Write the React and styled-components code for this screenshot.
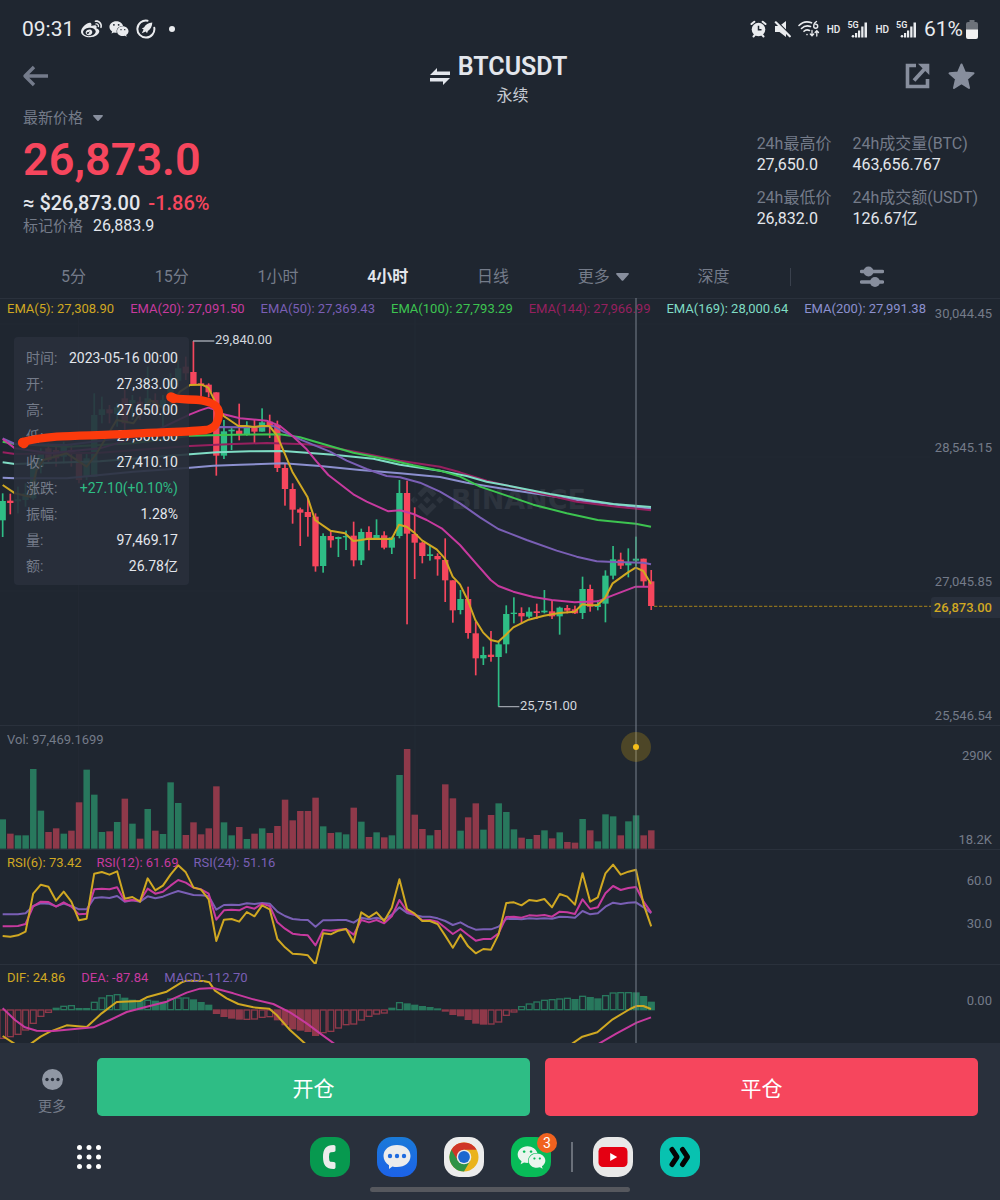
import React from "react";
import styled, { createGlobalStyle } from "styled-components";
import { FaWeibo, FaWeixin } from "react-icons/fa";

const c = {
  bg: "#1f2630",
  panel: "#29303c",
  line: "#2a313c",
  text: "#e3e6ec",
  muted: "#747b89",
  icon: "#878e9d",
  up: "#2ebd85",
  down: "#f6465d",
  yellow: "#d0a822",
  pink: "#c73a9f",
  purple: "#7a5fb5",
  green: "#3dc450",
  crimson: "#96205f",
  mint: "#7fdcc4",
  lilac: "#8c90cf",
};

const GlobalStyle = createGlobalStyle`
  * { box-sizing: border-box; }
  body {
    margin: 0;
    background: ${c.panel};
    color: ${c.text};
    font-family: Roboto, "Noto Sans CJK SC", sans-serif;
  }
  button, select {
    font: inherit;
    color: inherit;
    background: none;
    border: 0;
    padding: 0;
    cursor: pointer;
  }
  svg { display: block; }
`;

/* ---------- layout ---------- */

const Page = styled.div`
  min-height: 100vh;
  display: flex;
  flex-direction: column;
`;

const Top = styled.div`
  background: ${c.bg};
`;

const StatusBar = styled.div`
  display: flex;
  justify-content: space-between;
  align-items: center;
  height: 50px;
  padding: 8px 22px 0;
  color: #e9ebee;
  font-size: 21px;
`;

const StatusGroup = styled.div`
  display: flex;
  align-items: center;
  gap: 7px;
`;

const Dot = styled.span`
  width: 6px;
  height: 6px;
  margin-left: 6px;
  border-radius: 50%;
  background: currentColor;
`;

const Hd = styled.span`
  font-size: 10px;
  font-weight: 500;
`;

const Battery = styled.span`
  display: flex;
  align-items: center;
  gap: 3px;
`;

const Header = styled.header`
  display: grid;
  grid-template-columns: 1fr auto 1fr;
  align-items: start;
  padding: 0 25px 0 22px;
`;

const HeaderSide = styled.div`
  display: flex;
  align-items: center;
  justify-content: ${(p) => (p.$end ? "flex-end" : "flex-start")};
  gap: 18px;
  height: 52px;
  color: ${c.icon};
`;

const Pair = styled.div`
  display: flex;
  gap: 8px;
`;

const SwapSlot = styled.div`
  display: flex;
  align-items: center;
  height: 52px;
`;

const PairText = styled.div`
  text-align: center;
`;

const PairName = styled.h1`
  margin: 0;
  font-size: 25px;
  line-height: 34px;
  font-weight: 600;
`;

const PairKind = styled.div`
  font-size: 16px;
  line-height: 24px;
  color: #c6cad2;
`;

const Quote = styled.section`
  display: flex;
  justify-content: space-between;
  padding: 0 22px 20px 23px;
`;

const PricePicker = styled.label`
  display: flex;
  align-items: center;
  gap: 9px;
  height: 20px;
  color: ${c.muted};
  font-size: 15px;
  select {
    appearance: none;
    line-height: 20px;
    outline: 0;
  }
`;

const LastPrice = styled.div`
  margin-top: 2px;
  font-size: 45px;
  line-height: 60px;
  font-weight: 600;
  color: ${c.down};
`;

const FiatPrice = styled.div`
  font-size: 20px;
  line-height: 26px;
  font-weight: 500;
  span {
    margin-left: 8px;
    color: ${c.down};
  }
`;

const MarkPrice = styled.div`
  font-size: 15px;
  line-height: 20px;
  color: ${c.muted};
  span {
    margin-left: 10px;
    font-size: 16px;
    color: ${c.text};
  }
`;

const Stats = styled.dl`
  display: grid;
  grid-template-columns: auto auto;
  align-self: flex-start;
  gap: 12px 21px;
  margin: 26px 0 0;
`;

const Stat = styled.div`
  font-size: 16px;
  dt {
    line-height: 20px;
    color: ${c.muted};
  }
  dd {
    margin: 0;
    line-height: 22px;
    color: ${c.text};
  }
`;

const Periods = styled.nav`
  display: flex;
  justify-content: space-between;
  align-items: center;
  height: 42px;
  padding: 0 116px 0 61px;
  color: ${c.muted};
`;

const Period = styled.button`
  display: flex;
  align-items: center;
  gap: 6px;
  font-size: 16px;
  line-height: 24px;
  font-weight: ${(p) => (p.$active ? 600 : 400)};
  color: ${(p) => (p.$active ? c.text : c.muted)};
`;

const PeriodRule = styled.span`
  width: 1px;
  height: 18px;
  margin-left: -8px;
  background: #3a414d;
`;

const IconButton = styled.button`
  display: flex;
  color: ${c.icon};
`;

/* ---------- chart ---------- */

const Chart = styled.main`
  position: relative;
  overflow: hidden;
  background: ${c.bg};
`;

const Pane = styled.section`
  position: relative;
  display: flex;
  justify-content: space-between;
  height: ${(p) => p.$height}px;
  border-top: 1px solid ${c.line};
`;

const Plot = styled.svg`
  position: absolute;
  inset: 0;
  width: 100%;
  height: 100%;
`;

const Legend = styled.div`
  position: relative;
  display: flex;
  align-self: flex-start;
  gap: ${(p) => p.$gap || 15}px;
  padding: ${(p) => p.$top}px 0 0 7px;
  font-size: 13px;
  line-height: 16px;
  white-space: nowrap;
`;

const Key = styled.span`
  color: ${(p) => p.$color};
`;

const Axis = styled.div`
  position: relative;
  display: flex;
  flex-direction: column;
  justify-content: space-between;
  padding: ${(p) => p.$pad};
  font-size: 13px;
  line-height: 16px;
  text-align: right;
  color: ${c.muted};
`;

const PriceTag = styled.div`
  position: absolute;
  right: 0;
  top: 298px;
  padding: 0 8px 0 3px;
  border-radius: 3px 0 0 3px;
  background: ${c.panel};
  color: ${c.yellow};
  font-size: 13px;
  font-weight: 500;
  line-height: 21px;
`;

const Callout = styled.span`
  position: absolute;
  left: ${(p) => p.$left};
  top: ${(p) => p.$top}px;
  font-size: 13px;
  line-height: 16px;
  color: #d3d7de;
`;

const Watermark = styled.div`
  position: absolute;
  left: 41%;
  top: 183px;
  display: flex;
  align-items: center;
  gap: 7px;
  color: #2d343e;
  font-family: "DejaVu Sans", sans-serif;
  font-size: 27px;
  line-height: 36px;
  font-weight: 700;
`;

const Details = styled.dl`
  position: absolute;
  left: 14px;
  top: 38px;
  width: 175px;
  margin: 0;
  padding: 8px 11px 6px 12px;
  border-radius: 4px;
  background: rgba(41, 48, 60, 0.9);
`;

const Detail = styled.div`
  display: flex;
  justify-content: space-between;
  font-size: 14px;
  line-height: 26px;
  white-space: nowrap;
  dt { color: ${c.muted}; }
  dd {
    margin: 0;
    color: ${(p) => (p.$up ? c.up : c.text)};
  }
`;

const Scribble = styled.svg`
  position: absolute;
  left: 0;
  top: 79px;
  pointer-events: none;
`;

const Crosshair = styled.div`
  position: absolute;
  left: calc(63.6% - 1px);
  top: 0;
  bottom: 0;
  width: 2px;
  background: rgba(120, 127, 139, 0.5);
`;

const Handle = styled.div`
  position: absolute;
  left: calc(63.6% - 15px);
  top: 434px;
  display: grid;
  place-items: center;
  width: 30px;
  height: 30px;
  border-radius: 50%;
  background: rgba(240, 185, 11, 0.22);
  &::after {
    content: "";
    width: 6px;
    height: 6px;
    border-radius: 50%;
    background: #f5be1a;
  }
`;

/* ---------- bottom ---------- */

const Actions = styled.div`
  display: flex;
  gap: 15px;
  padding: 15px 22px 0;
`;

const More = styled.button`
  display: flex;
  flex-direction: column;
  align-items: center;
  gap: 6px;
  width: 60px;
  padding-top: 11px;
  font-size: 14px;
  line-height: 20px;
  color: ${c.muted};
`;

const Trade = styled.button`
  flex: 1;
  height: 58px;
  border-radius: 5px;
  background: ${(p) => (p.$buy ? c.up : c.down)};
  color: #fff;
  font-size: 21px;
`;

const Dock = styled.nav`
  display: grid;
  grid-template-columns: 1fr auto 1fr;
  align-items: center;
  padding: 21px 0 0 10px;
`;

const Launcher = styled.button`
  display: flex;
  justify-self: start;
  margin-left: 67px;
`;

const Apps = styled.div`
  display: flex;
  align-items: center;
  gap: 27px;
`;

const AppTile = styled.button`
  position: relative;
  display: grid;
  place-items: center;
  width: 40px;
  height: 40px;
  border-radius: 15px;
  background: ${(p) => p.$bg};
  color: ${(p) => p.$fg || "#ececec"};
`;

const Badge = styled.span`
  position: absolute;
  right: -6px;
  top: -4px;
  width: 20px;
  height: 20px;
  border-radius: 50%;
  background: #f0621f;
  color: #fff;
  font-size: 14px;
  line-height: 20px;
`;

const DockRule = styled.span`
  width: 2px;
  height: 30px;
  margin: 0 -7px;
  background: #6a707a;
`;

const HomePill = styled.div`
  width: 26%;
  height: 5px;
  margin: 10px auto 8px;
  border-radius: 3px;
  background: #56585e;
`;

/* ---------- data, in thirds of a chart unit ---------- */

const STEP = 22.89;
const cx = (i) => 8 + i * STEP;

// direction, high, low, body top, body bottom
const candles = [
  [1, 520, 651, 543, 601], [0, 521, 583, 542, 549], [1, 500, 580, 538, 544], [1, 490, 560, 520, 540],
  [1, 420, 540, 440, 535], [1, 385, 460, 400, 440], [0, 370, 430, 385, 420], [0, 375, 440, 390, 415],
  [1, 365, 430, 380, 410], [0, 375, 440, 390, 402], [0, 395, 490, 402, 480], [1, 400, 480, 415, 470],
  [1, 220, 470, 285, 470], [1, 230, 310, 268, 285], [0, 255, 310, 268, 280], [1, 250, 320, 262, 282],
  [0, 210, 330, 235, 310], [1, 225, 300, 240, 250], [0, 230, 300, 245, 262], [1, 140, 260, 235, 262],
  [0, 220, 280, 240, 265], [1, 225, 320, 240, 262], [1, 160, 250, 180, 240], [1, 120, 200, 145, 182],
  [0, 110, 180, 140, 160], [0, 63, 195, 156, 195], [0, 175, 228, 190, 196], [0, 190, 232, 194, 217],
  [0, 217, 467, 217, 407], [1, 300, 417, 334, 407], [1, 323, 390, 329, 334], [0, 251, 361, 332, 343],
  [1, 304, 347, 318, 344], [0, 300, 370, 318, 335], [1, 265, 335, 307, 335], [0, 284, 354, 305, 318],
  [0, 302, 456, 315, 444], [0, 430, 557, 444, 507], [0, 490, 611, 507, 569], [0, 563, 678, 568, 578],
  [0, 535, 650, 576, 591], [0, 580, 755, 590, 739], [1, 640, 758, 648, 738], [0, 632, 683, 648, 661],
  [1, 650, 711, 651, 657], [1, 632, 690, 648, 652], [0, 605, 739, 647, 721], [1, 626, 735, 636, 721],
  [0, 619, 691, 636, 657], [1, 598, 660, 645, 657], [0, 634, 688, 646, 683], [1, 650, 702, 652, 683],
  [1, 480, 655, 519, 648], [0, 482, 913, 519, 641], [0, 562, 777, 642, 668], [0, 665, 730, 668, 708],
  [1, 675, 722, 703, 708], [0, 700, 767, 708, 718], [0, 655, 846, 720, 781], [0, 781, 908, 781, 871],
  [1, 810, 883, 837, 870], [0, 800, 956, 837, 939], [0, 905, 1066, 940, 1015], [1, 980, 1035, 1005, 1015],
  [0, 933, 1025, 1004, 1011], [1, 965, 1160, 973, 1011], [1, 856, 1000, 882, 973], [1, 832, 910, 878, 882],
  [0, 862, 912, 879, 889], [1, 862, 895, 875, 890], [0, 851, 897, 874, 879], [1, 810, 880, 872, 877],
  [0, 840, 897, 874, 889], [1, 860, 944, 863, 889], [0, 855, 880, 864, 872], [0, 857, 882, 868, 880],
  [1, 770, 897, 807, 879], [0, 794, 875, 807, 860], [1, 840, 871, 853, 861], [1, 751, 907, 767, 851],
  [1, 678, 778, 718, 767], [0, 698, 747, 719, 737], [1, 685, 772, 726, 736], [1, 650, 740, 716, 722],
  [0, 716, 798, 716, 784], [0, 750, 870, 784, 858],
];

const volumeTops = [
  298, 341, 346, 346, 147, 272, 336, 325, 341, 332, 247, 149, 224, 336, 334, 306, 236, 311, 356, 267, 332,
  342, 187, 249, 345, 307, 343, 325, 199, 307, 346, 321, 357, 341, 325, 339, 318, 239, 301, 273, 273, 233,
  319, 339, 337, 343, 263, 305, 351, 337, 352, 346, 165, 87, 284, 327, 346, 330, 193, 235, 332, 292, 250,
  329, 285, 250, 276, 328, 353, 357, 345, 331, 355, 337, 366, 368, 297, 331, 364, 283, 289, 346, 304, 286,
  346, 331,
];

const rsi = [
  [c.purple, [583, 583, 583, 580, 558, 550, 551, 559, 551, 558, 568, 568, 534, 532, 534, 528, 545, 541, 545, 529, 535, 530, 521, 513, 519, 525, 526, 528, 569, 555, 554, 555, 550, 552, 549, 551, 575, 588, 597, 599, 600, 620, 601, 601, 600, 600, 608, 593, 598, 593, 599, 584, 562, 579, 585, 590, 590, 595, 603, 615, 607, 620, 629, 628, 628, 620, 597, 596, 598, 595, 596, 595, 596, 590, 591, 593, 573, 583, 580, 560, 548, 552, 548, 547, 562, 580]],
  [c.pink, [619, 619, 618, 612, 559, 545, 546, 560, 547, 560, 583, 581, 508, 506, 508, 502, 543, 540, 543, 506, 521, 515, 497, 480, 488, 503, 508, 521, 599, 571, 569, 571, 560, 566, 551, 558, 607, 626, 641, 644, 646, 676, 630, 632, 629, 627, 644, 600, 607, 600, 610, 589, 540, 574, 584, 601, 600, 605, 623, 642, 627, 645, 662, 657, 657, 640, 591, 590, 593, 586, 587, 585, 590, 575, 577, 582, 538, 567, 562, 520, 498, 510, 504, 501, 545, 578]],
  [c.yellow, [648, 650, 646, 635, 521, 494, 500, 542, 515, 545, 601, 596, 461, 456, 464, 454, 536, 531, 545, 475, 511, 497, 464, 436, 457, 502, 509, 538, 663, 599, 597, 605, 576, 589, 556, 568, 657, 682, 701, 703, 706, 733, 640, 643, 632, 627, 667, 577, 592, 577, 603, 563, 478, 567, 581, 603, 603, 612, 647, 683, 644, 679, 700, 687, 689, 643, 549, 547, 556, 540, 543, 537, 562, 522, 530, 554, 460, 545, 532, 460, 434, 464, 455, 449, 553, 619]],
];

const MACD_ZERO = 869;
const macd = [
  955, 950, 943, 930, 910, 889, 877, 864, 858, 856, 865, 865, 846, 833, 826, 823, 834, 840, 843, 840, 843,
  846, 836, 833, 833, 839, 847, 855, 880, 889, 894, 897, 898, 897, 892, 890, 899, 914, 926, 930, 934, 946,
  938, 934, 924, 914, 912, 900, 889, 882, 879, 864, 847, 851, 855, 859, 862, 866, 873, 883, 887, 898, 909,
  912, 912, 906, 886, 876, 859, 851, 845, 840, 838, 836, 834, 838, 828, 832, 836, 826, 818, 817, 817, 818,
  829, 846,
];

const isHollow = (i) => i === 0 || macd[i] < macd[i - 1] || (i >= 22 && i <= 24) || i === 32 || i === 64 || i === 82;

const emas = [
  [c.lilac, "8,473 45,475 200,475 400,455 570,443 640,437 720,434 850,430 960,438 1080,450 1200,460 1320,471 1400,488 1440,495 1500,505 1600,520 1750,543 1850,554 1953,566"],
  [c.crimson, "8,397 45,402 300,398 570,378 700,372 800,369 920,373 1000,383 1100,402 1200,422 1320,440 1380,457 1460,482 1600,515 1730,545 1850,560 1953,571"],
  [c.mint, "8,427 45,432 300,424 570,403 650,397 750,394 850,393 1000,404 1120,416 1200,434 1320,452 1400,468 1460,485 1540,500 1650,522 1760,540 1840,552 1953,561"],
  [c.green, "8,365 45,372 200,380 400,370 570,347 700,344 840,343 900,352 990,378 1060,398 1160,418 1240,436 1320,452 1380,470 1440,500 1500,520 1600,554 1700,580 1793,600 1907,611 1953,620"],
  [c.purple, "8,355 45,372 200,375 400,350 570,328 660,321 740,322 820,318 850,335 900,358 990,395 1040,422 1100,447 1160,468 1200,472 1260,488 1320,515 1380,550 1440,592 1495,627 1580,660 1670,692 1730,710 1790,724 1840,726 1930,728 1953,733"],
  [c.pink, "8,357 45,385 150,400 300,385 450,340 570,283 600,271 625,263 648,270 671,283 720,295 800,302 840,318 880,350 920,388 950,425 985,465 1060,523 1100,545 1165,574 1200,571 1240,582 1280,600 1325,625 1380,675 1426,728 1472,780 1495,798 1540,815 1600,831 1655,840 1724,847 1793,844 1838,826 1907,800 1945,800"],
  [c.yellow, "8,495 45,520 90,530 110,450 130,420 200,400 260,440 290,400 350,300 400,310 450,240 500,270 540,215 570,195 605,194 625,203 648,250 671,288 715,318 739,318 762,321 785,318 808,318 831,346 877,455 922,530 945,600 991,632 1035,640 1060,663 1083,660 1106,656 1175,657 1197,614 1220,620 1245,640 1266,661 1310,688 1335,716 1358,770 1380,793 1403,840 1426,900 1449,937 1472,960 1495,965 1517,945 1540,922 1586,899 1632,887 1678,879 1724,875 1747,853 1770,856 1793,855 1815,834 1838,790 1884,757 1907,743 1930,753 1953,792"],
];

const macdLines = [
  [c.yellow, "8,948 45,972"],
  [c.yellow, "90,973 122,950 150,935 200,916 260,921 305,880 350,846 420,843 440,832 500,815 545,787 560,782 610,783 628,787 645,812 680,835 715,852 760,862 808,866 830,885 870,930 920,975"],
  [c.yellow, "1712,974 1747,950 1792,937 1838,898 1890,867 1910,858 1930,858 1953,867"],
  [c.pink, "8,865 45,900 75,922 110,932 160,933 280,922 330,900 380,876 440,860 500,845 560,818 600,806 640,804 700,820 760,838 820,852 870,877 920,910 960,940 1008,975"],
  [c.pink, "1790,975 1850,940 1910,908 1953,892"],
];

const details = [
  ["时间:", "2023-05-16 00:00"],
  ["开:", "27,383.00"],
  ["高:", "27,650.00"],
  ["低:", "27,300.60"],
  ["收:", "27,410.10"],
  ["涨跌:", "+27.10(+0.10%)", true],
  ["振幅:", "1.28%"],
  ["量:", "97,469.17"],
  ["额:", "26.78亿"],
];

const stats = [
  ["24h最高价", "27,650.0"],
  ["24h成交量(BTC)", "463,656.767"],
  ["24h最低价", "26,832.0"],
  ["24h成交额(USDT)", "126.67亿"],
];

/* ---------- drawings ---------- */

const Caret = ({ size = 10 }) => (
  <svg width={size} height={size * 0.6} viewBox="0 0 10 6" fill={c.icon} aria-hidden="true">
    <path d="M.8 0h8.4c.7 0 1 .7.5 1.200L5.600 5.700c-.3.4-.9.4-1.200 0L.3 1.200C-.2.7.1 0 .8 0z" />
  </svg>
);

const RocketIcon = () => (
  <svg width="20" height="20" viewBox="0 0 20 20" fill="none" aria-hidden="true">
    <path d="M11.500 1.700A8.500 8.500 0 1 0 18.300 8.800" stroke="currentColor" strokeWidth="2" strokeLinecap="round" />
    <path d="M16.300 3.500c-4 .3-6.800 2.300-8.300 5l-2.200.8 1.800 1.200-1.800 3.800 4-1.700 1.200 1.600.9-2.300c2.500-1.600 4.300-4.200 4.400-8.400z" fill="currentColor" />
  </svg>
);

const AlarmIcon = () => (
  <svg width="17" height="18" viewBox="0 0 17 18" aria-hidden="true">
    <g stroke="currentColor" strokeWidth="2" strokeLinecap="round">
      <path d="M1.500 4L4.300 1.700M15.500 4L12.700 1.700M3.500 16.500l1.600-1.800M13.500 16.500l-1.600-1.800" />
    </g>
    <circle cx="8.500" cy="9.500" r="6.800" fill="currentColor" />
    <path d="M8.500 5.800v4h3" stroke={c.bg} strokeWidth="1.500" fill="none" />
  </svg>
);

const MuteIcon = () => (
  <svg width="17" height="18" viewBox="0 0 17 18" aria-hidden="true">
    <path d="M1 6h4.500L12 1v16l-6.500-5H1z" fill="currentColor" />
    <path d="M2.200 1l14 14" stroke={c.bg} strokeWidth="1.800" />
    <path d="M1.800 2.300l14 14" stroke="currentColor" strokeWidth="2.200" strokeLinecap="round" />
  </svg>
);

const WifiIcon = () => (
  <svg width="22" height="18" viewBox="0 0 22 18" fill="none" stroke="currentColor" strokeWidth="1.600" strokeLinecap="round" aria-hidden="true">
    <path d="M1 5.500C4.500 1.900 9.500 1.200 13.500 2.800M3.500 8.500c2.600-2.600 6-3.100 9-2M6 11.300c1.500-1.500 3.600-1.700 5.500-.8M9 14.500v.1" />
    <path d="M18.500 1.500c-2 1.200-2.800 3-2.800 4.700a2 2 0 1 0 2-2" strokeWidth="1.400" />
    <path d="M14 10.500v5M12.300 14l1.700 1.900 1.700-1.900M18.800 16v-5M17.100 12.500l1.700-1.900 1.700 1.900" strokeWidth="1.300" />
  </svg>
);

const SignalBox = styled.span`
  position: relative;
  display: block;
  width: 21px;
  height: 18px;
  span {
    position: absolute;
    left: 0;
    top: 1px;
    font-size: 9px;
    line-height: 9px;
    font-weight: 600;
  }
`;

const Signal = () => (
  <SignalBox>
    <span>5G</span>
    <svg width="21" height="18" viewBox="0 0 21 18" fill="currentColor" aria-hidden="true">
      <circle cx="6" cy="16.300" r="1.300" />
      <path d="M8 13h2.200v4.500H8zM11 10.500h2.200v7H11zM14.200 6.500h2.300v11h-2.300zM17.500 2.500h2.500v15h-2.500z" />
    </svg>
  </SignalBox>
);

const BatteryIcon = () => (
  <svg width="12" height="19" viewBox="0 0 12 19" aria-hidden="true">
    <path d="M3.500 0h5v2h1.500a2 2 0 0 1 2 2v6H0V4a2 2 0 0 1 2-2h1.500z" fill="#6d727a" />
    <path d="M0 9.500h12V17a2 2 0 0 1-2 2H2a2 2 0 0 1-2-2z" fill="#f2f2f2" />
  </svg>
);

const BackIcon = () => (
  <svg width="27" height="22" viewBox="0 0 27 22" fill="none" stroke="#747b8b" strokeWidth="3.400" strokeLinejoin="round" aria-hidden="true">
    <path d="M26 11H3.500M12 2L3 11l9 9" />
  </svg>
);

const SwapIcon = () => (
  <svg width="20" height="17" viewBox="0 0 20 17" fill={c.text} aria-hidden="true">
    <path d="M7 0v3.500h13v3.500H0z M13 17v-3.500H0V10h20z" />
  </svg>
);

const ShareIcon = () => (
  <svg width="25" height="26" viewBox="0 0 25 26" fill="none" aria-hidden="true">
    <path d="M11 2.500H2.500v21H22.500V16" stroke="currentColor" strokeWidth="3.600" />
    <path d="M9 17.500L20 5.500" stroke="currentColor" strokeWidth="3.800" />
    <path d="M13 .7h11.300V12z" fill="currentColor" />
  </svg>
);

const StarIcon = () => (
  <svg width="27" height="27" viewBox="0 0 27 27" fill="currentColor" stroke="currentColor" strokeWidth="2" strokeLinejoin="round" aria-hidden="true">
    <path d="M13.500 1.500l3.400 8 8.600.8-6.500 5.700 2 8.900-7.500-4.700L6 24.900l2-8.900-6.500-5.700 8.600-.8z" />
  </svg>
);

const SlidersIcon = () => (
  <svg width="24" height="22" viewBox="0 0 24 22" aria-hidden="true">
    <path d="M1.500 5.500h21M1.500 16h21" stroke="currentColor" strokeWidth="3.400" strokeLinecap="round" />
    <circle cx="8.500" cy="5.500" r="5" fill="currentColor" />
    <circle cx="15" cy="16" r="5" fill="currentColor" />
  </svg>
);

const WatermarkLogo = () => (
  <svg width="34" height="34" viewBox="0 0 34 34" fill="currentColor" aria-hidden="true">
    <path d="M17 1l9.500 9.500-3.700 3.700L17 8.400l-5.800 5.800-3.700-3.700zM4.200 13.300L7.900 17l-3.700 3.700L.5 17zM17 13.300l3.700 3.700-3.700 3.700-3.700-3.700zM29.800 13.300l3.700 3.700-3.700 3.700-3.700-3.700zM11.200 19.800l5.800 5.800 5.800-5.800 3.700 3.700L17 33l-9.500-9.500z" />
  </svg>
);

const MoreIcon = () => (
  <svg width="21" height="21" viewBox="0 0 21 21" aria-hidden="true">
    <circle cx="10.500" cy="10.500" r="10.500" fill="#9097a4" />
    <g fill={c.panel}>
      <circle cx="5" cy="10.500" r="1.700" />
      <circle cx="10.500" cy="10.500" r="1.700" />
      <circle cx="16" cy="10.500" r="1.700" />
    </g>
  </svg>
);

const GridIcon = () => (
  <svg width="24" height="24" viewBox="0 0 24 24" fill="#fff" aria-hidden="true">
    {[2.5, 12, 21.5].map((y) => [2.5, 12, 21.5].map((x) => <circle key={`${x}-${y}`} cx={x} cy={y} r="2.500" />))}
  </svg>
);

const PhoneIcon = () => (
  <svg width="40" height="40" viewBox="0 0 40 40" fill="currentColor" aria-hidden="true">
    <path d="M23.500 8C16 8 13 12 13 20s3 12 10.500 12c1.200 0 2-.7 2-1.800v-3.400c0-1-.7-1.600-1.700-1.700l-2.800-.3c-1-.1-1.500-.7-1.700-1.600a17 17 0 0 1 0-6.400c.2-.9.7-1.500 1.700-1.600l2.800-.3c1-.1 1.700-.7 1.700-1.700V9.800c0-1.100-.8-1.800-2-1.800z" />
  </svg>
);

const ChatIcon = () => (
  <svg width="40" height="40" viewBox="0 0 40 40" aria-hidden="true">
    <path d="M20 8c8 0 13.500 4.600 13.500 11S28 30 20 30c-1.600 0-3.200-.2-4.600-.6L12 32v-3.800C8.700 26.200 6.500 23 6.500 19 6.500 12.600 12 8 20 8z" fill="currentColor" />
    <g fill="#1f6be0">
      <circle cx="13" cy="19" r="2.200" />
      <circle cx="20" cy="19" r="2.200" />
      <circle cx="27" cy="19" r="2.200" />
    </g>
  </svg>
);

const ChromeIcon = () => (
  <svg width="30" height="30" viewBox="0 0 30 30" aria-hidden="true">
    <circle cx="15" cy="15" r="14.500" fill="#eab31c" />
    <path d="M2.440 7.750A14.500 14.500 0 0 0 15 29.500L21.300 18.600 15 15z" fill="#2f9347" />
    <path d="M2.440 7.750A14.500 14.500 0 0 1 27.560 7.750H15v7.250L8.700 18.600z" fill="#cf3527" />
    <circle cx="15" cy="15" r="7.300" fill="#ececec" />
    <circle cx="15" cy="15" r="5.900" fill="#1c68d0" />
  </svg>
);

const YoutubeIcon = () => (
  <svg width="30" height="20" viewBox="0 0 30 20" aria-hidden="true">
    <rect x=".5" width="29" height="20" rx="4.500" fill="#e40012" />
    <path d="M12.200 6l7 4-7 4z" fill="#fff" />
  </svg>
);

const ChevronsIcon = () => (
  <svg width="24" height="22" viewBox="0 0 24 22" fill="none" stroke="#050505" strokeWidth="5" strokeLinecap="round" strokeLinejoin="round" aria-hidden="true">
    <path d="M4 3.500L9 11l-5 7.500M14.500 3.500L19.500 11l-5 7.500" />
  </svg>
);

const Lines = ({ items }) =>
  items.map(([color, points], i) => (
    <polyline key={i} points={points} fill="none" stroke={color} strokeWidth="6" strokeLinejoin="round" />
  ));

const Grid = ({ top, height }) => (
  <path d={`M235 ${top}v${height}M1245 ${top}v${height}`} stroke="#232a34" strokeWidth="3" />
);

const viewBox = (top, height) => `0 ${top} 3000 ${height}`;

/* ---------- panes ---------- */

const PricePane = () => (
  <Pane $height={427}>
    <Watermark>
      <WatermarkLogo />
      BINANCE
    </Watermark>
    <Plot viewBox={viewBox(-63, 1278)} preserveAspectRatio="none" role="img" aria-label="BTCUSDT 4小时">
      <Grid top={-63} height={1278} />
      <path d="M0 12h2790M0 411h2790M0 813h2790" stroke="#222933" strokeWidth="3" />
      {candles.map(([up, high, low, top, bottom], i) => (
        <g key={i} fill={up ? c.up : c.down}>
          <rect x={cx(i) - 2.5} y={high} width="5" height={low - high} />
          <rect x={cx(i) - 9.5} y={top} width="19" height={Math.max(bottom - top, 4)} />
        </g>
      ))}
      <Lines items={emas} />
      <path d="M579 63h64M1495 1160h63" stroke="#9ba0a9" strokeWidth="4" />
      <path d="M1962 859H2796" stroke="#8b701f" strokeWidth="4" strokeDasharray="10 5" />
    </Plot>
    <Callout $left="21.5%" $top={33}>29,840.00</Callout>
    <Callout $left="52%" $top={399}>25,751.00</Callout>
    <Legend $top={2} $gap={16}>
      <Key $color={c.yellow}>EMA(5): 27,308.90</Key>
      <Key $color={c.pink}>EMA(20): 27,091.50</Key>
      <Key $color={c.purple}>EMA(50): 27,369.43</Key>
      <Key $color={c.green}>EMA(100): 27,793.29</Key>
      <Key $color={c.crimson}>EMA(144): 27,966.99</Key>
      <Key $color={c.mint}>EMA(169): 28,000.64</Key>
      <Key $color={c.lilac}>EMA(200): 27,991.38</Key>
    </Legend>
    <Axis $pad="7px 8px 1px 0">
      <span>30,044.45</span>
      <span>28,545.15</span>
      <span>27,045.85</span>
      <span>25,546.54</span>
    </Axis>
    <PriceTag>26,873.00</PriceTag>
    <Details>
      {details.map(([name, value, up]) => (
        <Detail key={name} $up={up}>
          <dt>{name}</dt>
          <dd>{value}</dd>
        </Detail>
      ))}
    </Details>
    <Scribble width="240" height="90" viewBox="0 174 720 270" fill="none" stroke="#fb3a0c" strokeLinecap="round" strokeLinejoin="round" aria-hidden="true">
      <path d="M514 232C535 242 575 236 605 241C640 247 657 262 657 280C655 310 645 324 618 330C570 336 480 336 400 341C310 346 230 346 170 350C120 354 90 360 68 366" strokeWidth="25" />
      <path d="M513 231l8 4M68 368l4 2" strokeWidth="29" />
    </Scribble>
  </Pane>
);

const VolumePane = () => (
  <Pane $height={124}>
    <Plot viewBox={viewBox(18, 369)} preserveAspectRatio="none" role="img" aria-label="Vol">
      <Grid top={18} height={369} />
      {volumeTops.map((top, i) => (
        <rect key={i} x={cx(i) - 9.5} y={top} width="19.500" height={386 - top} fill={candles[i][0] ? "#28785d" : "#8f394a"} />
      ))}
    </Plot>
    <Legend $top={6}>
      <Key $color={c.muted}>Vol: 97,469.1699</Key>
    </Legend>
    <Axis $pad="22px 8px 1px 0">
      <span>290K</span>
      <span>18.2K</span>
    </Axis>
  </Pane>
);

const RsiPane = () => (
  <Pane $height={115}>
    <Plot viewBox={viewBox(390, 342)} preserveAspectRatio="none" role="img" aria-label="RSI">
      <Grid top={390} height={342} />
      <Lines items={rsi.map(([color, ys]) => [color, ys.map((y, i) => `${cx(i)},${y}`).join(" ")])} />
    </Plot>
    <Legend $top={5}>
      <Key $color={c.yellow}>RSI(6): 73.42</Key>
      <Key $color={c.pink}>RSI(12): 61.69</Key>
      <Key $color={c.purple}>RSI(24): 51.16</Key>
    </Legend>
    <Axis $pad="23px 8px 32px 0">
      <span>60.0</span>
      <span>30.0</span>
    </Axis>
  </Pane>
);

const MacdPane = () => (
  <Pane $height={79}>
    <Plot viewBox={viewBox(735, 234)} preserveAspectRatio="none" role="img" aria-label="MACD">
      <Grid top={735} height={234} />
      {macd.map((y, i) => {
        const color = y < MACD_ZERO ? "#28785d" : "#8f394a";
        const hollow = isHollow(i);
        return (
          <rect
            key={i}
            x={cx(i) - 8.5}
            y={Math.min(y, MACD_ZERO) + 1}
            width="17.500"
            height={Math.max(Math.abs(y - MACD_ZERO) - 1, 2)}
            fill={hollow ? "none" : color}
            stroke={color}
            strokeWidth="4"
          />
        );
      })}
      <Lines items={macdLines} />
    </Plot>
    <Legend $top={5} $gap={16}>
      <Key $color={c.yellow}>DIF: 24.86</Key>
      <Key $color={c.pink}>DEA: -87.84</Key>
      <Key $color={c.purple}>MACD: 112.70</Key>
    </Legend>
    <Axis $pad="28px 8px 0 0">
      <span>0.00</span>
    </Axis>
  </Pane>
);

export default function App() {
  return (
    <Page>
      <GlobalStyle />
      <Top>
        <StatusBar>
          <StatusGroup>
            <span>09:31</span>
            <FaWeibo size={21} />
            <FaWeixin size={20} />
            <RocketIcon />
            <Dot />
          </StatusGroup>
          <StatusGroup>
            <AlarmIcon />
            <MuteIcon />
            <WifiIcon />
            <Hd>HD</Hd>
            <Signal />
            <Hd>HD</Hd>
            <Signal />
            <Battery>
              61%
              <BatteryIcon />
            </Battery>
          </StatusGroup>
        </StatusBar>
        <Header>
          <HeaderSide>
            <IconButton aria-label="返回"><BackIcon /></IconButton>
          </HeaderSide>
          <Pair>
            <SwapSlot><SwapIcon /></SwapSlot>
            <PairText>
              <PairName>BTCUSDT</PairName>
              <PairKind>永续</PairKind>
            </PairText>
          </Pair>
          <HeaderSide $end>
            <IconButton aria-label="分享"><ShareIcon /></IconButton>
            <IconButton aria-label="收藏"><StarIcon /></IconButton>
          </HeaderSide>
        </Header>
        <Quote>
          <div>
            <PricePicker>
              <select aria-label="价格类型" defaultValue="last">
                <option value="last">最新价格</option>
                <option value="mark">标记价格</option>
              </select>
              <Caret />
            </PricePicker>
            <LastPrice>26,873.0</LastPrice>
            <FiatPrice>≈ $26,873.00<span>-1.86%</span></FiatPrice>
            <MarkPrice>标记价格<span>26,883.9</span></MarkPrice>
          </div>
          <Stats>
            {stats.map(([name, value]) => (
              <Stat key={name}>
                <dt>{name}</dt>
                <dd>{value}</dd>
              </Stat>
            ))}
          </Stats>
        </Quote>
        <Periods>
          <Period>5分</Period>
          <Period>15分</Period>
          <Period>1小时</Period>
          <Period $active aria-current="true">4小时</Period>
          <Period>日线</Period>
          <Period aria-haspopup="menu">更多<Caret size={13} /></Period>
          <Period>深度</Period>
          <PeriodRule />
          <IconButton aria-label="设置"><SlidersIcon /></IconButton>
        </Periods>
      </Top>
      <Chart>
        <PricePane />
        <VolumePane />
        <RsiPane />
        <MacdPane />
        <Crosshair />
        <Handle />
      </Chart>
      <Actions>
        <More>
          <MoreIcon />
          更多
        </More>
        <Trade $buy>开仓</Trade>
        <Trade>平仓</Trade>
      </Actions>
      <Dock>
        <Launcher aria-label="全部应用"><GridIcon /></Launcher>
        <Apps>
          <AppTile $bg="#07994f" aria-label="电话"><PhoneIcon /></AppTile>
          <AppTile $bg="linear-gradient(#1a7ad8, #1c62e8)" aria-label="信息"><ChatIcon /></AppTile>
          <AppTile $bg="#ececec" aria-label="Chrome"><ChromeIcon /></AppTile>
          <AppTile $bg="#08bb58" $fg="#e9f5ee" aria-label="微信">
            <FaWeixin size={29} />
            <Badge>3</Badge>
          </AppTile>
          <DockRule />
          <AppTile $bg="#e8e8e8" aria-label="YouTube"><YoutubeIcon /></AppTile>
          <AppTile $bg="#08c2b0" aria-label="快捷应用"><ChevronsIcon /></AppTile>
        </Apps>
      </Dock>
      <HomePill />
    </Page>
  );
}
